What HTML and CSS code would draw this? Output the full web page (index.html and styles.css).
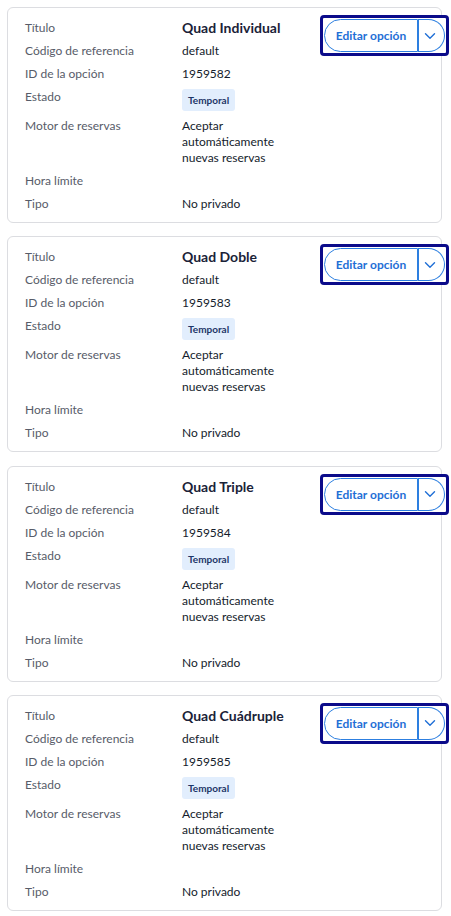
FILE: index.html
```html
<!DOCTYPE html>
<html lang="es">
<head>
<meta charset="utf-8">
<link rel="stylesheet" href="styles.css">
</head>
<body>
<main class="list">
  <section class="card">
    <dl class="info">
      <dt>Título</dt><dd class="title">Quad Individual</dd>
      <dt>Código de referencia</dt><dd>default</dd>
      <dt>ID de la opción</dt><dd>1959582</dd>
      <dt>Estado</dt><dd><span class="badge">Temporal</span></dd>
      <dt>Motor de reservas</dt><dd class="wrap">Aceptar automáticamente nuevas reservas</dd>
      <dt>Hora límite</dt><dd></dd>
      <dt>Tipo</dt><dd>No privado</dd>
    </dl>
    <div class="actions"><div class="split"><button class="main">Editar opción</button><button class="more"><svg width="12" height="8" viewBox="0 0 12 8"><path d="M1.5 1.8 L6 6.2 L10.5 1.8" fill="none" stroke="#1f6fd6" stroke-width="1.4" stroke-linecap="round" stroke-linejoin="round"/></svg></button></div></div>
  </section>
  <section class="card">
    <dl class="info">
      <dt>Título</dt><dd class="title">Quad Doble</dd>
      <dt>Código de referencia</dt><dd>default</dd>
      <dt>ID de la opción</dt><dd>1959583</dd>
      <dt>Estado</dt><dd><span class="badge">Temporal</span></dd>
      <dt>Motor de reservas</dt><dd class="wrap">Aceptar automáticamente nuevas reservas</dd>
      <dt>Hora límite</dt><dd></dd>
      <dt>Tipo</dt><dd>No privado</dd>
    </dl>
    <div class="actions"><div class="split"><button class="main">Editar opción</button><button class="more"><svg width="12" height="8" viewBox="0 0 12 8"><path d="M1.5 1.8 L6 6.2 L10.5 1.8" fill="none" stroke="#1f6fd6" stroke-width="1.4" stroke-linecap="round" stroke-linejoin="round"/></svg></button></div></div>
  </section>
  <section class="card">
    <dl class="info">
      <dt>Título</dt><dd class="title">Quad Triple</dd>
      <dt>Código de referencia</dt><dd>default</dd>
      <dt>ID de la opción</dt><dd>1959584</dd>
      <dt>Estado</dt><dd><span class="badge">Temporal</span></dd>
      <dt>Motor de reservas</dt><dd class="wrap">Aceptar automáticamente nuevas reservas</dd>
      <dt>Hora límite</dt><dd></dd>
      <dt>Tipo</dt><dd>No privado</dd>
    </dl>
    <div class="actions"><div class="split"><button class="main">Editar opción</button><button class="more"><svg width="12" height="8" viewBox="0 0 12 8"><path d="M1.5 1.8 L6 6.2 L10.5 1.8" fill="none" stroke="#1f6fd6" stroke-width="1.4" stroke-linecap="round" stroke-linejoin="round"/></svg></button></div></div>
  </section>
  <section class="card">
    <dl class="info">
      <dt>Título</dt><dd class="title">Quad Cuádruple</dd>
      <dt>Código de referencia</dt><dd>default</dd>
      <dt>ID de la opción</dt><dd>1959585</dd>
      <dt>Estado</dt><dd><span class="badge">Temporal</span></dd>
      <dt>Motor de reservas</dt><dd class="wrap">Aceptar automáticamente nuevas reservas</dd>
      <dt>Hora límite</dt><dd></dd>
      <dt>Tipo</dt><dd>No privado</dd>
    </dl>
    <div class="actions"><div class="split"><button class="main">Editar opción</button><button class="more"><svg width="12" height="8" viewBox="0 0 12 8"><path d="M1.5 1.8 L6 6.2 L10.5 1.8" fill="none" stroke="#1f6fd6" stroke-width="1.4" stroke-linecap="round" stroke-linejoin="round"/></svg></button></div></div>
  </section>
</main>
</body>
</html>
```
FILE: styles.css
```css
* { box-sizing: border-box; }
html, body { margin: 0; padding: 0; background: #fff; }
body {
  font-family: Lato, "Noto Sans", "Liberation Sans", sans-serif;
  font-size: 12px;
  color: #1c2434;
}
.list {
  display: flex;
  flex-direction: column;
  gap: 13.33px;
  padding: 7px 9px 5px 7px;
}
.card {
  display: flex;
  align-items: flex-start;
  border: 1px solid #dcdde1;
  border-radius: 6px;
  padding: 12px 17px 9px 17px;
  height: 216px;
}
.info {
  flex: 1;
  margin: 0;
  display: grid;
  grid-template-columns: 157px 1fr;
  row-gap: 7px;
  line-height: 16px;
}
.info dt { color: #575c69; margin: 0; }
.info dd { margin: 0; color: #141c2c; min-height: 16px; }
.info dd.title { font-weight: 700; font-size: 14px; color: #1a2238; }
.info dd.wrap { max-width: 110px; }
.badge {
  display: inline-block;
  background: #e2eefd;
  color: #1d3668;
  font-weight: 700;
  font-size: 10px;
  line-height: 22px;
  height: 22px;
  padding: 0 6px;
  border-radius: 3px;
}
.actions {
  margin-top: -5px;
  margin-right: -25px;
  background: #fff;
}
.split {
  display: flex;
  border: 3px solid #0b0b8a;
  border-radius: 4px;
  padding: 1px;
  background: #fff;
}
.split button {
  font-family: inherit;
  font-size: 12px;
  font-weight: 700;
  color: #1f6fd6;
  background: #fff;
  border: 1px solid #2d7fe0;
  height: 33px;
  margin: 0;
  cursor: pointer;
  display: flex;
  align-items: center;
  justify-content: center;
}
.split .main {
  width: 94px;
  border-radius: 17px 0 0 17px;
  padding: 0;
}
.split .more {
  width: 27px;
  border-left: none;
  border-radius: 0 17px 17px 0;
  padding: 0 2px 0 0;
  position: relative;
}
.split .more::before {
  content: "";
  position: absolute;
  left: 0;
  top: -1px;
  bottom: -1px;
  width: 1px;
  background: #2d7fe0;
}
```
